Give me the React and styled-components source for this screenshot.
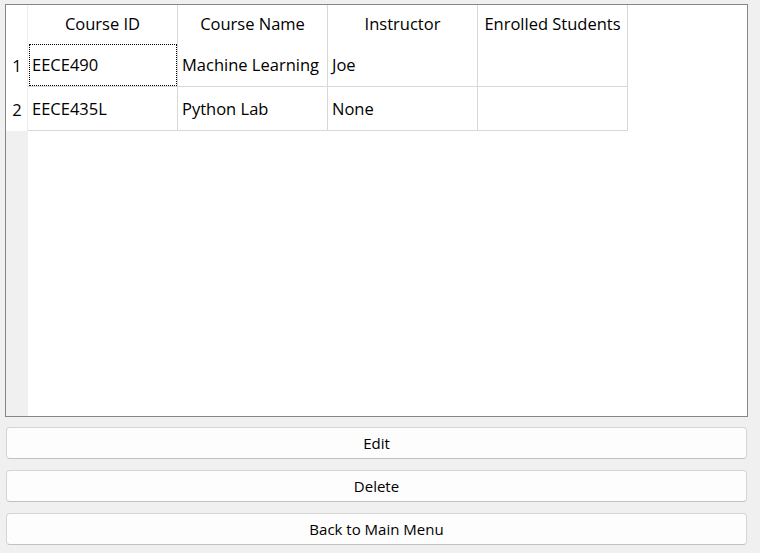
import styled, { createGlobalStyle } from "styled-components";

const GlobalStyle = createGlobalStyle`
  html, body {
    margin: 0;
    padding: 0;
    background: #f0f0f0;
  }
  body {
    font-family: "Open Sans", "Noto Sans", sans-serif;
    color: #000;
  }
`;

const Page = styled.div`
  width: 760px;
  height: 553px;
  box-sizing: border-box;
  padding: 4px 12px 0 5px;
  display: flex;
  flex-direction: column;
`;

const Frame = styled.div`
  height: 413px;
  box-sizing: border-box;
  border: 1px solid #86868b;
  background: #fff;
  display: flex;
`;

const RowHeaderCol = styled.div`
  width: 22px;
  display: flex;
  flex-direction: column;
  background: #f0f0f0;
`;

const Corner = styled.div`
  height: 38px;
  background: #fff;
  border-right: 1px solid #ececec;
  box-sizing: border-box;
`;

const RowNum = styled.div`
  height: 44px;
  background: #fff;
  border-right: 1px solid #ececec;
  box-sizing: border-box;
  display: flex;
  align-items: center;
  justify-content: center;
  font-size: 16.5px;
  padding-left: 1px;
`;

const Grid = styled.div`
  display: grid;
  grid-template-columns: repeat(4, 150px);
  grid-template-rows: 38px 44px 44px;
  align-self: flex-start;
`;

const HeadCell = styled.div`
  border-right: 1px solid #d8d8d8;
  display: flex;
  justify-content: center;
  padding-top: 7px;
  box-sizing: border-box;
  font-size: 16.5px;
  white-space: nowrap;
`;

const Cell = styled.div`
  border-right: 1px solid #d8d8d8;
  border-bottom: 1px solid #d8d8d8;
  box-sizing: border-box;
  display: flex;
  align-items: center;
  padding: 0 4px;
  font-size: 16.5px;
  white-space: nowrap;
  outline: ${(p) => (p.$focus ? "1px dotted #000" : "none")};
  outline-offset: -2px;
`;

const Buttons = styled.div`
  display: flex;
  flex-direction: column;
  gap: 11px;
  margin-top: 10px;
  padding: 0 1px;
`;

const Button = styled.button`
  height: 32px;
  box-sizing: border-box;
  background: #fdfdfd;
  border: 1px solid #d5d5d5;
  border-bottom-color: #c2c2c2;
  border-radius: 4px;
  font-family: "Open Sans", "Noto Sans", sans-serif;
  font-size: 15px;
  color: #000;
  padding: 0;
`;

const headers = ["Course ID", "Course Name", "Instructor", "Enrolled Students"];
const rows = [
  ["EECE490", "Machine Learning", "Joe", ""],
  ["EECE435L", "Python Lab", "None", ""],
];

export default function App() {
  return (
    <>
      <GlobalStyle />
      <Page>
        <Frame>
          <RowHeaderCol>
            <Corner />
            {rows.map((_, i) => (
              <RowNum key={i}>{i + 1}</RowNum>
            ))}
          </RowHeaderCol>
          <Grid>
            {headers.map((h) => (
              <HeadCell key={h}>{h}</HeadCell>
            ))}
            {rows.map((r, i) =>
              r.map((v, j) => (
                <Cell key={i + "-" + j} $focus={i === 0 && j === 0}>
                  {v}
                </Cell>
              ))
            )}
          </Grid>
        </Frame>
        <Buttons>
          <Button>Edit</Button>
          <Button>Delete</Button>
          <Button>Back to Main Menu</Button>
        </Buttons>
      </Page>
    </>
  );
}
